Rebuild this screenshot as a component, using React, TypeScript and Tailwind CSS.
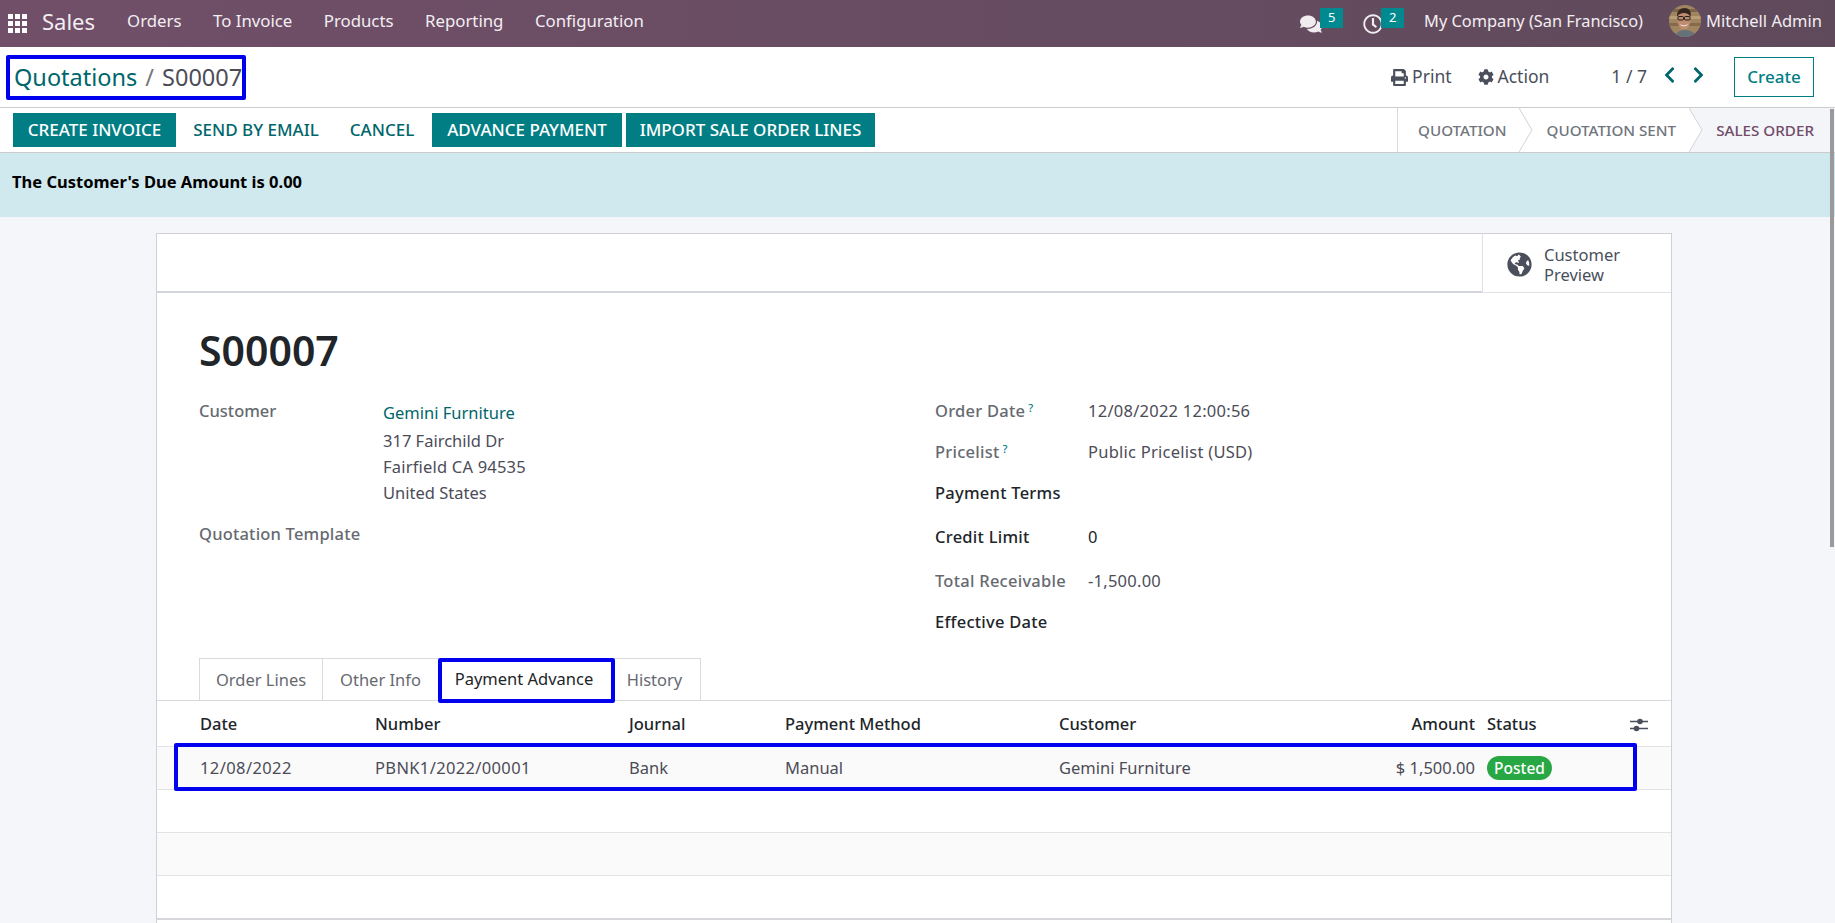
import React from 'react';
import { FaComments, FaRegClock, FaPrint, FaCog, FaChevronLeft, FaChevronRight, FaGlobeAmericas } from 'react-icons/fa';

const menus = ['Orders', 'To Invoice', 'Products', 'Reporting', 'Configuration'];

const Avatar = () => (
  <svg viewBox="0 0 32 32" className="w-8 h-8 rounded-full shrink-0">
    <rect width="32" height="32" fill="#a08560" />
    <rect x="0" y="4" width="32" height="3" fill="#7d6446" />
    <rect x="0" y="11" width="32" height="3" fill="#b89e74" />
    <rect x="0" y="18" width="32" height="3" fill="#85694a" />
    <path d="M6 32c1-5 5-7 10-7s10 2 11 7z" fill="#66727a" />
    <ellipse cx="15" cy="15" rx="6.500" ry="9.500" fill="#c08c70" />
    <path d="M8 12c-.5-6 3.500-9 7.500-9s7.500 3 6 9c-1.500-3-3.500-4-6.500-4s-5.500 1-7 4z" fill="#33261e" />
    <rect x="9" y="11.500" width="5.500" height="3.500" rx="1" fill="none" stroke="#221d1b" strokeWidth="1" />
    <rect x="15.500" y="11.500" width="5.500" height="3.500" rx="1" fill="none" stroke="#221d1b" strokeWidth="1" />
    <path d="M11 19c2 1.800 6 1.800 8 0-.7 3-7.300 3-8 0z" fill="#f4efe8" />
  </svg>
);

const Navbar = () => (
  <header className="h-[47px] shrink-0 flex items-center text-[#f3eef2] bg-linear-to-r from-[#714f69] to-[#5f4a5b]">
    <svg viewBox="0 0 19 19" className="w-[19px] h-[19px] ml-[8px] fill-white">
      <rect x="0" y="0" width="5" height="5" /><rect x="7" y="0" width="5" height="5" /><rect x="14" y="0" width="5" height="5" />
      <rect x="0" y="7" width="5" height="5" /><rect x="7" y="7" width="5" height="5" /><rect x="14" y="7" width="5" height="5" />
      <rect x="0" y="14" width="5" height="5" /><rect x="7" y="14" width="5" height="5" /><rect x="14" y="14" width="5" height="5" />
    </svg>
    <span className="ml-[15px] text-[22px] pb-[5px]">Sales</span>
    <nav className="flex gap-[31.500px] ml-[32px] text-[16.800px] pb-[5px]">
      {menus.map((m) => (
        <span key={m}>{m}</span>
      ))}
    </nav>
    <div className="ml-auto flex items-center">
      <div className="relative w-[22px] h-[20px]">
        <FaComments className="w-[22px] h-[20px] text-[#f0ecef]" />
        <span className="absolute left-[20px] -top-[6px] w-[23px] h-[20px] bg-[#00898e] text-white text-[13px] flex items-center justify-center">5</span>
      </div>
      <div className="relative w-[20px] h-[20px] ml-[41px]">
        <FaRegClock className="w-[20px] h-[20px] text-[#f0ecef]" />
        <span className="absolute left-[18px] -top-[6px] w-[23px] h-[20px] bg-[#00898e] text-white text-[13px] flex items-center justify-center">2</span>
      </div>
      <span className="ml-[41px] text-[16.350px] pb-[5px]">My Company (San Francisco)</span>
      <span className="ml-[26px] -mt-[5px]"><Avatar /></span>
      <span className="ml-[5px] mr-[13px] text-[16.500px] pb-[5px]">Mitchell Admin</span>
    </div>
  </header>
);

const ControlPanel = () => (
  <div className="h-[61px] shrink-0 bg-white border-b border-[#ccc] flex items-center">
    <div className="ml-[6px] h-[45px] w-[240px] border-4 border-[#0000ee] rounded-[2px] flex items-center pl-[4px] pt-[2px] text-[23.500px] whitespace-nowrap">
      <span className="text-[#00666b]">Quotations</span>
      <span className="text-[#777] mx-[8px]">/</span>
      <span className="text-[#4c4c57]">S00007</span>
    </div>
    <div className="ml-auto flex items-center text-[#4a4f5b] text-[17.500px]">
      <FaPrint className="w-[17px] h-[17px]" />
      <span className="ml-[4px] -mt-[2px]">Print</span>
      <FaCog className="w-[16px] h-[16px] ml-[26px]" />
      <span className="ml-[4px] -mt-[2px]">Action</span>
      <span className="ml-[62px] -mt-[2px]">1 / 7</span>
      <FaChevronLeft className="w-[13px] h-[18px] ml-[16px] -mt-[4px] text-[#00666b]" />
      <FaChevronRight className="w-[13px] h-[18px] ml-[16px] -mt-[4px] text-[#00666b]" />
      <button className="ml-[29px] mr-[21px] w-[80px] h-[40px] border border-[#017e84] text-[#017e84] text-[17px] font-medium">Create</button>
    </div>
  </div>
);

const Chevron = ({ fill }: { fill?: string }) => (
  <svg viewBox="0 0 14 44" className="w-[14px] h-[44px] shrink-0" preserveAspectRatio="none">
    {fill && <rect width="14" height="44" fill={fill} />}
    <path d="M0 0L13 22L0 44z" fill="#fff" />
    <path d="M0 0L13 22L0 44" fill="none" stroke="#d0d3d8" strokeWidth="1" />
  </svg>
);

const ActionBar = () => (
  <div className="h-[45px] shrink-0 bg-white border-b border-[#ccc] flex items-center text-[17px] font-medium whitespace-nowrap">
    <button className="ml-[13px] w-[163px] h-[34px] bg-[#017e84] text-white">CREATE INVOICE</button>
    <button className="ml-[17px] w-[126px] h-[34px] text-[#00666b]">SEND BY EMAIL</button>
    <button className="ml-[30px] w-[66px] h-[34px] text-[#00666b]">CANCEL</button>
    <button className="ml-[17px] w-[190px] h-[34px] bg-[#017e84] text-white">ADVANCE PAYMENT</button>
    <button className="ml-[4px] w-[249px] h-[34px] bg-[#017e84] text-white">IMPORT SALE ORDER LINES</button>
    <div className="ml-auto h-full flex items-center border-l border-[#d8dadd] text-[15.200px] text-[#71757c]">
      <span className="pl-[20px] pr-[12px]">QUOTATION</span>
      <Chevron />
      <span className="pl-[14px] pr-[13px]">QUOTATION SENT</span>
      <Chevron fill="#f4f5f9" />
      <span className="h-full flex items-center bg-[#f4f5f9] pl-[13px] pr-[21px] text-[#714b67]">SALES ORDER</span>
    </div>
  </div>
);

const Help = () => <sup className="text-[11px] text-[#017e84] ml-[3px]">?</sup>;

const rightRows = [
  { label: 'Order Date', value: '12/08/2022 12:00:56', help: true },
  { label: 'Pricelist', value: 'Public Pricelist (USD)', help: true },
  { label: 'Payment Terms', value: '', bold: true },
  { label: 'Credit Limit', value: '0', bold: true, cls: 'mt-[3px]' },
  { label: 'Total Receivable', value: '-1,500.00', cls: 'mt-[3px]' },
  { label: 'Effective Date', value: '', bold: true },
];

const FormGroups = () => (
  <div className="flex mt-[18px] pl-[42px] text-[16.500px] text-[#4c4c57]">
    <div className="w-[736px] pt-[9px]">
      <div className="flex">
        <div className="w-[184px] -mt-[1px] text-[#666a70] font-medium">Customer</div>
        <div className="leading-[26px]">
          <div className="text-[#00666b] mb-[2px]">Gemini Furniture</div>
          <div>317 Fairchild Dr</div>
          <div className="tracking-[0.2px]">Fairfield CA 94535</div>
          <div>United States</div>
        </div>
      </div>
      <div className="mt-[15px] leading-[26px] text-[#666a70] font-medium tracking-[0.2px]">Quotation Template</div>
    </div>
    <div>
      {rightRows.map((r) => (
        <div key={r.label} className={`flex items-center h-[41px] ${r.cls ?? ''}`}>
          <div className={`w-[153px] font-medium whitespace-nowrap tracking-[0.25px] ${r.bold ? 'text-[#212529]' : 'text-[#666a70]'}`}>
            {r.label}
            {r.help && <Help />}
          </div>
          <div className={`tracking-[0.25px] ${r.bold ? 'text-[#212529]' : ''}`}>{r.value}</div>
        </div>
      ))}
    </div>
  </div>
);

const Tabs = () => (
  <div className="mt-[15px] h-[43px] pl-[42px] flex border-b border-[#d8dadd] text-[16.500px] text-[#666a70]">
    <div className="w-[124px] h-[43px] pt-[1px] border border-[#d8dadd] bg-white flex items-center justify-center">Order Lines</div>
    <div className="w-[115px] h-[43px] pt-[1px] border-y border-[#d8dadd] bg-white flex items-center justify-center">Other Info</div>
    <div className="relative z-10 w-[177px] h-[45px] border-4 border-[#0000ee] rounded-[2px] bg-white text-[#212529] flex items-center justify-center pb-[2px] pr-[5px]">
      Payment Advance
    </div>
    <div className="w-[86px] h-[43px] pt-[1px] pr-[6px] border-y border-r border-[#d8dadd] bg-white flex items-center justify-center">History</div>
  </div>
);

const SlidersIcon = () => (
  <svg viewBox="0 0 18 16" className="w-[18px] h-[16px] fill-[#4a4f5b] stroke-[#4a4f5b]">
    <path d="M0 4.500H18M0 11.500H18" strokeWidth="1.500" fill="none" />
    <circle cx="10" cy="4.500" r="2.800" stroke="none" />
    <circle cx="6.500" cy="11.500" r="2.800" stroke="none" />
  </svg>
);

const cols = 'grid grid-cols-[175px_254px_156px_274px_241px_175px_1fr] pl-[43px] items-center';

const PaymentTable = () => (
  <div className="text-[16.500px] whitespace-nowrap">
    <div className={`${cols} h-[46px] pt-[2px] border-b border-[#e2e3e5] font-medium text-[#212529]`}>
      <div>Date</div>
      <div>Number</div>
      <div>Journal</div>
      <div>Payment Method</div>
      <div>Customer</div>
      <div className="text-right">Amount</div>
      <div className="flex items-center justify-between pl-[12px] pr-[23px]">
        <span>Status</span>
        <SlidersIcon />
      </div>
    </div>
    <div className={`${cols} relative h-[43px] border-b border-[#e2e3e5] bg-[#fafafa] text-[#4c4c57]`}>
      <div className="tracking-[0.4px]">12/08/2022</div>
      <div className="tracking-[0.35px]">PBNK1/2022/00001</div>
      <div>Bank</div>
      <div>Manual</div>
      <div>Gemini Furniture</div>
      <div className="text-right">$ 1,500.00</div>
      <div className="pl-[12px]">
        <span className="inline-flex items-center justify-center w-[65px] h-[24px] -mt-[5px] rounded-full bg-[#28a745] text-white text-[15.500px] font-medium">Posted</span>
      </div>
      <div className="absolute left-[17px] w-[1463px] -top-[4px] h-[48px] border-4 border-[#0000ee] rounded-[2px]" />
    </div>
    <div className="h-[43px] border-b border-[#e2e3e5] bg-white" />
    <div className="h-[43px] border-b border-[#e2e3e5] bg-[#fafafa]" />
    <div className="h-[44px] border-b-2 border-[#d5d7da] bg-white" />
  </div>
);

const Sheet = () => (
  <div className="ml-[156px] mr-[163px] mt-[16px] bg-white border border-[#ced1d6] border-b-0 flex-1">
    <div className="h-[59px] flex justify-end border-b-2 border-[#d2d5d9]">
      <div className="w-[189px] h-[59px] border-l border-b border-[#dfe1e4] bg-white flex items-center text-[16.500px] text-[#4a4f5b]">
        <FaGlobeAmericas className="w-[25px] h-[25px] ml-[24px] mt-[2px]" />
        <div className="ml-[12px] mt-[4px] leading-[20px]">Customer<br />Preview</div>
      </div>
    </div>
    <h1 className="mt-[34px] ml-[42px] text-[41px] leading-[46px] font-semibold text-[#212529]">S00007</h1>
    <FormGroups />
    <Tabs />
    <PaymentTable />
  </div>
);

export default function App() {
  return (
    <div className="relative w-full h-[923px] overflow-hidden flex flex-col bg-[#f4f6fa] font-['Noto_Sans',sans-serif]">
      <Navbar />
      <ControlPanel />
      <ActionBar />
      <div className="h-[64px] shrink-0 bg-[#d0e9ee] flex items-center pl-[12px] pb-[5px] text-[16.500px] font-bold text-black">
        The Customer's Due Amount is 0.00
      </div>
      <Sheet />
      <div className="absolute right-[1px] top-[109px] w-[4px] h-[438px] bg-[#9a9a9a]" />
    </div>
  );
}
